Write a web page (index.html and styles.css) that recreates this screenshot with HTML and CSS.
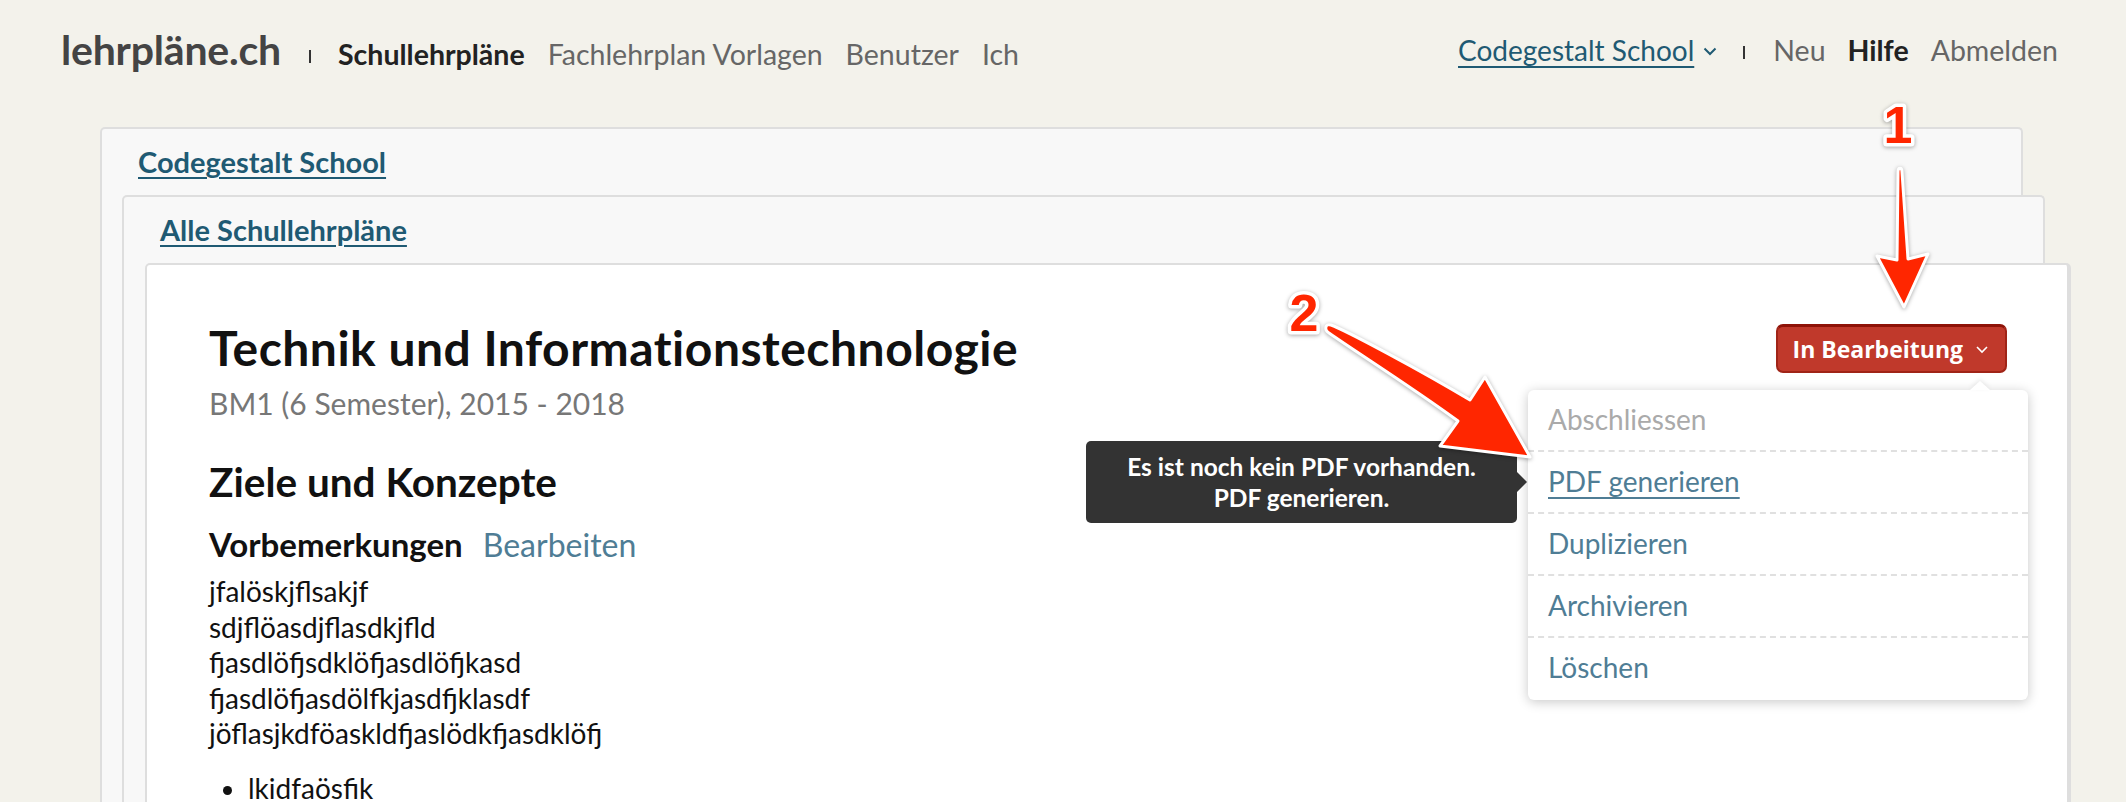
FILE: index.html
```html
<!DOCTYPE html>
<html>
  <head>
    <meta charset="utf-8">
    <title>lehrpläne.ch – Technik und Informationstechnologie</title>
    <link rel="stylesheet" href="styles.css">
  </head>
  <body>
    <div class="page">
      <header class="topbar">
        <nav class="nav nav-left">
          <a class="logo">lehrpläne.ch</a>
          <span class="sep"></span>
          <a class="nav-link active">Schullehrpläne</a>
          <a class="nav-link">Fachlehrplan Vorlagen</a>
          <a class="nav-link">Benutzer</a>
          <a class="nav-link">Ich</a>
        </nav>
        <nav class="nav nav-right">
          <a class="school-link">Codegestalt School</a>
          <svg class="chevron" width="14" height="9" viewBox="0 0 14 9"><path d="M1.5 1.5 L7 7 L12.5 1.5" fill="none" stroke="#1f5a73" stroke-width="2"/></svg>
          <span class="sep sep-right"></span>
          <a class="nav-link">Neu</a>
          <a class="nav-link active">Hilfe</a>
          <a class="nav-link">Abmelden</a>
        </nav>
      </header>

      <main class="crumbs">
        <section class="crumb">
          <div class="crumb-head"><a>Codegestalt School</a></div>
          <section class="crumb crumb-inner">
            <div class="crumb-head"><a>Alle Schullehrpläne</a></div>

            <article class="sheet">
              <div class="sheet-head">
                <div class="sheet-title">
                  <h1>Technik und Informationstechnologie</h1>
                  <p class="meta">BM1 (6 Semester), 2015 - 2018</p>
                </div>
                <div class="status">
                  <button class="status-btn">In Bearbeitung
                    <svg width="14" height="9" viewBox="0 0 14 9"><path d="M2 2 L7 7 L12 2" fill="none" stroke="#fff" stroke-width="1.6"/></svg>
                  </button>
                  <ul class="status-menu">
                    <li class="disabled">Abschliessen</li>
                    <li class="current">
                      <a>PDF generieren</a>
                      <div class="tip">Es ist noch kein PDF vorhanden.<br>PDF generieren.</div>
                    </li>
                    <li><a>Duplizieren</a></li>
                    <li><a>Archivieren</a></li>
                    <li><a>Löschen</a></li>
                  </ul>
                </div>
              </div>

              <h2>Ziele und Konzepte</h2>
              <h3>Vorbemerkungen <a class="edit">Bearbeiten</a></h3>
              <p class="text">
                jfalöskjflsakjf<br>
                sdjflöasdjflasdkjfld<br>
                fjasdlöfjsdklöfjasdlöfjkasd<br>
                fjasdlöfjasdölfkjasdfjklasdf<br>
                jöflasjkdföaskldfjaslödkfjasdklöfj
              </p>
              <ul class="bullets">
                <li>lkidfaösfik</li>
              </ul>
            </article>
          </section>
        </section>
      </main>

      <!-- Anmerkungen aus dem Screenshot-Tool -->
      <svg class="marks" width="2126" height="802" viewBox="0 0 2126 802">
        <text class="mark-num" x="1898" y="143">1</text>
        <path class="mark-arrow" d="M1898,172 C1898,167 1902,167 1902,172 L1908,259 L1928,254 L1904,307 L1877,256 L1897,260 Z"/>
        <text class="mark-num" x="1304" y="331">2</text>
        <path class="mark-arrow" d="M1331,325 C1345,330 1420,370 1470,400 L1485,377 L1530,457 L1440,446 L1458,421 C1410,386 1356,352 1329,333 C1324,330 1325,323 1331,325 Z"/>
      </svg>
    </div>
  </body>
</html>
```

FILE: styles.css
```css
* {
  box-sizing: border-box;
}

html, body {
  margin: 0;
  padding: 0;
}

body {
  font-family: Lato, "Liberation Sans", sans-serif;
  background-color: #f3f2eb;
  color: #111;
}

a {
  cursor: pointer;
}

.page {
  position: relative;
  height: 802px;
  overflow: hidden;
}

/* Kopfzeile */
.topbar {
  display: flex;
  justify-content: space-between;
  align-items: flex-start;
  height: 127px;
  padding: 30px 68px 0 61px;
}

.nav {
  display: flex;
  align-items: baseline;
  line-height: 40px;
  font-size: 28.5px;
}

.logo {
  font-size: 41px;
  font-weight: 700;
  color: #444;
  letter-spacing: -0.2px;
}

.sep {
  display: block;
  width: 2px;
  height: 13px;
  background-color: #333;
  margin: 0 27px 0 28px;
  position: relative;
  top: -2px;
}

.sep-right {
  margin: 0 28px 0 26px;
}

.nav-link {
  color: #666;
  margin-right: 23px;
}

.nav-right .nav-link {
  margin-right: 22px;
}

.nav-link:last-child,
.nav-right .nav-link:last-child {
  margin-right: 0;
}

.nav-link.active {
  color: #222;
  font-weight: 700;
}

.nav-right .school-link {
  font-size: 28px;
}

.school-link {
  color: #1f5a73;
  text-decoration: underline;
  text-underline-offset: 5px;
  text-decoration-thickness: 2px;
}

.chevron {
  margin-left: 9px;
  align-self: center;
  position: relative;
  top: 1px;
}

/* Brotkrumen-Karten */
.crumbs {
  margin: 0 103px 0 100px;
}

.crumb {
  background-color: #f8f8f8;
  border: 2px solid #dedede;
  border-bottom: none;
  border-radius: 5px 5px 0 0;
}

.crumb-inner {
  margin: 0 -24px 0 20px;
}

.crumb-head {
  height: 66px;
  line-height: 66px;
  padding-left: 36px;
  font-size: 29px;
  font-weight: 700;
}

.crumb-head a {
  color: #1f5a73;
  text-decoration: underline;
  text-underline-offset: 4px;
  text-decoration-thickness: 2px;
}

.sheet {
  background-color: #fff;
  margin: 0 -28px 0 21px;
  border: 2px solid #dedede;
  border-right-width: 4px;
  border-bottom: none;
  border-radius: 5px 5px 0 0;
  padding: 59px 60px 0 62px;
  min-height: 700px;
}

.sheet-head {
  display: flex;
  justify-content: space-between;
  align-items: flex-start;
}

.sheet h1 {
  margin: -4px 0 0;
  font-size: 48px;
  line-height: 55px;
  font-weight: 700;
  letter-spacing: 0.5px;
}

.meta {
  margin: 10px 0 0;
  font-size: 30px;
  line-height: 36px;
  color: #777;
}

.sheet h2 {
  margin: 38px 0 0;
  font-size: 40.5px;
  line-height: 46px;
  font-weight: 700;
}

.sheet h3 {
  margin: 19px 0 0;
  font-size: 33px;
  line-height: 40px;
  font-weight: 700;
}

.edit {
  font-weight: 400;
  font-size: 32px;
  color: #4f7d95;
  margin-left: 12px;
}

.text {
  margin: 9px 0 0;
  font-size: 28px;
  line-height: 35.5px;
}

.bullets {
  margin: 18px 0 0;
  padding-left: 39px;
  font-size: 28px;
  line-height: 36px;
}

/* Status-Knopf und Menue */
.status {
  position: relative;
}

.status-btn {
  display: flex;
  align-items: center;
  gap: 12px;
  height: 49px;
  padding: 0 16px 0 15px;
  font-family: "Open Sans", "DejaVu Sans", sans-serif;
  font-size: 23px;
  font-weight: 700;
  color: #fff;
  background-color: #c0392b;
  border: 2px solid #a02417;
  border-top: 3px solid #8e1308;
  border-radius: 7px;
}

.status-menu {
  position: absolute;
  top: 66px;
  right: -21px;
  width: 500px;
  margin: 0;
  padding: 0;
  list-style: none;
  background-color: #fff;
  border-radius: 6px;
  box-shadow: 0 2px 12px rgba(0, 0, 0, 0.22);
  font-size: 28px;
}

.status-menu::before {
  content: "";
  position: absolute;
  top: -9px;
  right: 38px;
  border-left: 10px solid transparent;
  border-right: 10px solid transparent;
  border-bottom: 9px solid #fff;
  filter: drop-shadow(0 -2px 2px rgba(0, 0, 0, 0.08));
}

.status-menu li {
  position: relative;
  height: 62px;
  line-height: 58px;
  padding: 0 20px;
  border-bottom: 2px dashed #e0e0e0;
}

.status-menu li:last-child {
  border-bottom: none;
}

.status-menu a {
  color: #4f7d95;
}

.status-menu .disabled {
  color: #aaa;
}

.status-menu .current a {
  text-decoration: underline;
  text-underline-offset: 5px;
  text-decoration-thickness: 2px;
}

.tip {
  position: absolute;
  right: calc(100% + 11px);
  top: 50%;
  transform: translateY(-50%);
  width: 431px;
  padding: 10px 0;
  background-color: #333;
  border-radius: 5px;
  color: #fff;
  font-size: 24.5px;
  font-weight: 700;
  line-height: 31px;
  text-align: center;
}

.tip::after {
  content: "";
  position: absolute;
  top: 50%;
  right: -10px;
  margin-top: -10px;
  border-top: 10px solid transparent;
  border-bottom: 10px solid transparent;
  border-left: 10px solid #333;
}

/* Pfeile */
.marks {
  position: absolute;
  top: 0;
  left: 0;
  pointer-events: none;
  filter: drop-shadow(0 1px 2px rgba(0, 0, 0, 0.35));
}

.mark-arrow {
  fill: #ff2600;
  stroke: #fff;
  stroke-width: 3;
  stroke-linejoin: round;
}

.mark-num {
  font-family: "Liberation Sans", Arial, sans-serif;
  font-size: 52px;
  font-weight: 700;
  fill: #ff2600;
  stroke: #fff;
  stroke-width: 7;
  stroke-linejoin: round;
  paint-order: stroke;
  text-anchor: middle;
}
```
